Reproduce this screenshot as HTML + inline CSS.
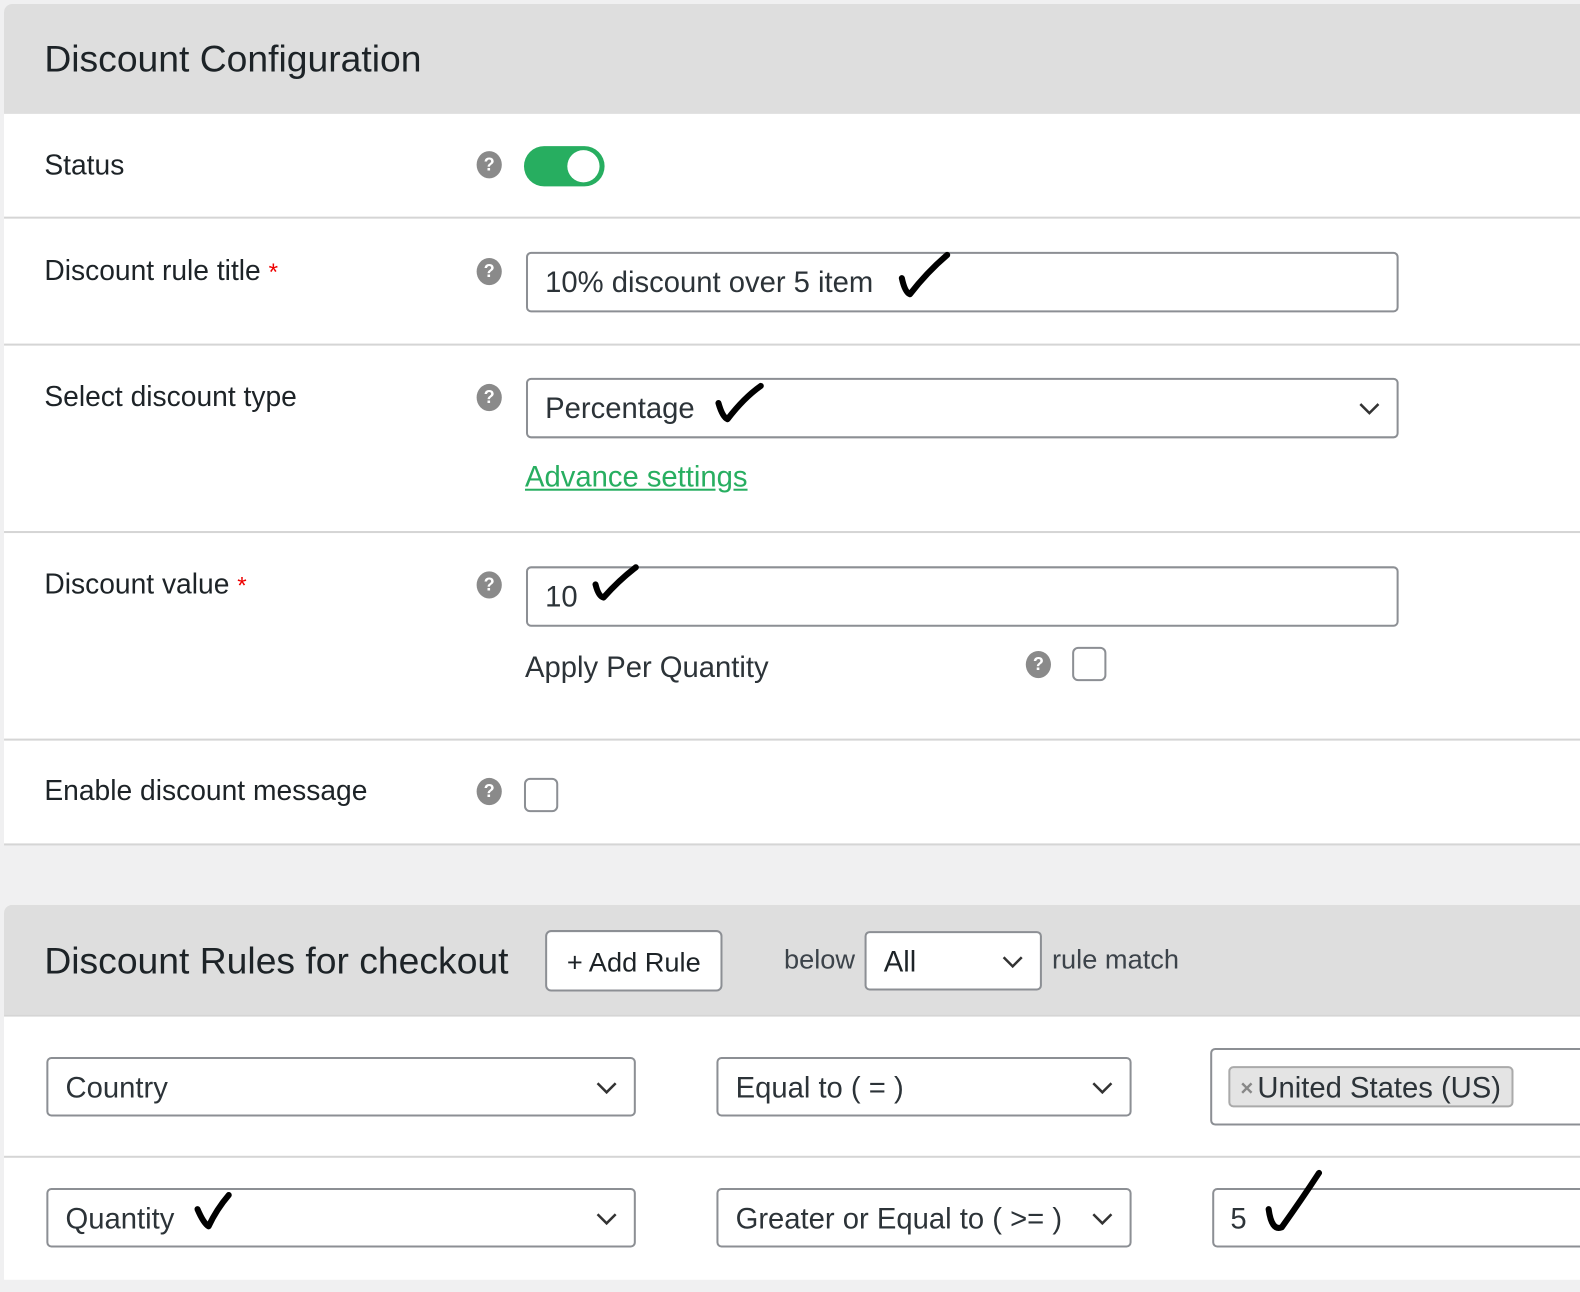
<!DOCTYPE html>
<html><head><meta charset="utf-8"><style>
*{box-sizing:border-box;margin:0;padding:0}
body{width:1580px;height:1282px;background:#f0f0f1;font-family:"Liberation Sans",sans-serif;color:#1d2327;position:relative;overflow:hidden}
#w{position:absolute;left:0;top:0;width:1568px;height:1272px;transform:scale(1.00765);transform-origin:0 0}
.a{position:absolute;white-space:nowrap}
.card{position:absolute;left:4px;right:-20px;background:#fff}
.hdr{position:absolute;left:0;right:0;top:0;background:#dedede}
.line{position:absolute;left:4px;right:-20px;height:2px;background:#d5d5d5}
.lbl{position:absolute;left:44px;font-size:28px;color:#1d2327;white-space:nowrap}
.req{color:#e00;font-size:24px}
.help{position:absolute;width:25px;height:27px;border-radius:50%;background:#8a8a8a;color:#fff;font-weight:bold;font-size:18px;text-align:center;line-height:27px}
.inp{position:absolute;border:2px solid #8c8f94;border-radius:5px;background:#fff;font-size:29px;color:#2c3338;padding-left:17px;padding-top:3px;display:flex;align-items:center;white-space:nowrap}
.chev{position:absolute;right:16px;top:50%;margin-top:-6px}
.cb{position:absolute;width:34px;height:34px;border:2px solid #8c8f94;border-radius:6px;background:#fff}
svg.ck{position:absolute;overflow:visible}
</style></head><body><div id="w">
<div class="card" style="top:4px;height:834px;border-radius:8px 0 0 0">
 <div class="hdr" style="height:109px;border-radius:8px 0 0 0"></div>
</div>
<div class="a" style="left:44px;top:38px;font-size:37px;color:#1d2327">Discount Configuration</div>
<div class="line" style="top:215px"></div>
<div class="line" style="top:341px"></div>
<div class="line" style="top:527px"></div>
<div class="line" style="top:733px"></div>
<div class="line" style="top:837px"></div>

<div class="lbl" style="top:148px">Status</div>
<div class="help" style="left:473px;top:150px">?</div>
<div class="a" style="left:520px;top:145px;width:80px;height:40px;border-radius:20px;background:#27ae60"><div class="a" style="left:43px;top:4px;width:32px;height:32px;border-radius:50%;background:#fff"></div></div>

<div class="lbl" style="top:253px">Discount rule title <span class="req">*</span></div>
<div class="help" style="left:473px;top:256px">?</div>
<div class="inp" style="left:522px;top:250px;width:866px;height:60px">10% discount over 5 item</div>

<div class="lbl" style="top:378px">Select discount type</div>
<div class="help" style="left:473px;top:381px">?</div>
<div class="inp" style="left:522px;top:375px;width:866px;height:60px">Percentage<svg class="chev" width="22" height="13" viewBox="0 0 22 13"><path d="M2 2L11 11L20 2" fill="none" stroke="#333" stroke-width="2.5"/></svg></div>
<div class="a" style="left:521px;top:458px;font-size:29px;color:#27ae60;text-decoration:underline">Advance settings</div>

<div class="lbl" style="top:564px">Discount value <span class="req">*</span></div>
<div class="help" style="left:473px;top:567px">?</div>
<div class="inp" style="left:522px;top:562px;width:866px;height:60px">10</div>
<div class="a" style="left:521px;top:647px;font-size:29px;color:#2c3338">Apply Per Quantity</div>
<div class="help" style="left:1018px;top:646px">?</div>
<div class="cb" style="left:1064px;top:642px"></div>

<div class="lbl" style="top:769px">Enable discount message</div>
<div class="help" style="left:473px;top:772px">?</div>
<div class="cb" style="left:520px;top:772px"></div>

<div class="card" style="top:898px;height:372px;border-radius:8px 0 0 0">
 <div class="hdr" style="height:111px;border-radius:8px 0 0 0;border-bottom:2px solid #d5d5d5"></div>
</div>
<div class="a" style="left:44px;top:933px;font-size:37px;color:#1d2327">Discount Rules for checkout</div>
<div class="a" style="left:541px;top:923px;width:176px;height:61px;border:2px solid #8c8f94;border-radius:6px;background:#fff;font-size:27px;text-align:center;line-height:60px;color:#1d2327">+ Add Rule</div>
<div class="a" style="left:778px;top:937px;font-size:27px;color:#3c434a">below</div>
<div class="inp" style="left:858px;top:924px;width:176px;height:59px;color:#1d2327">All<svg class="chev" width="22" height="13" viewBox="0 0 22 13"><path d="M2 2L11 11L20 2" fill="none" stroke="#333" stroke-width="2.5"/></svg></div>
<div class="a" style="left:1044px;top:937px;font-size:27px;color:#3c434a">rule match</div>

<div class="inp" style="left:46px;top:1049px;width:585px;height:59px">Country<svg class="chev" width="22" height="13" viewBox="0 0 22 13"><path d="M2 2L11 11L20 2" fill="none" stroke="#333" stroke-width="2.5"/></svg></div>
<div class="inp" style="left:711px;top:1049px;width:412px;height:59px">Equal to ( = )<svg class="chev" width="22" height="13" viewBox="0 0 22 13"><path d="M2 2L11 11L20 2" fill="none" stroke="#333" stroke-width="2.5"/></svg></div>
<div class="inp" style="left:1201px;top:1040px;width:400px;height:77px;padding-left:16px;padding-top:0"><div style="border:2px solid #aaa;border-radius:5px;background:#e4e4e4;height:41px;padding:3px 10px 0 10px;display:flex;align-items:center;font-size:29px;color:#2c3338"><span style="color:#888;font-size:22px;font-weight:bold;margin-right:4px">×</span>United States (US)</div></div>
<div class="line" style="top:1147px"></div>
<div class="inp" style="left:46px;top:1179px;width:585px;height:59px">Quantity<svg class="chev" width="22" height="13" viewBox="0 0 22 13"><path d="M2 2L11 11L20 2" fill="none" stroke="#333" stroke-width="2.5"/></svg></div>
<div class="inp" style="left:711px;top:1179px;width:412px;height:59px">Greater or Equal to ( &gt;= )<svg class="chev" width="22" height="13" viewBox="0 0 22 13"><path d="M2 2L11 11L20 2" fill="none" stroke="#333" stroke-width="2.5"/></svg></div>
<div class="inp" style="left:1203px;top:1179px;width:400px;height:59px;padding-left:16px">5</div>

<svg class="ck" style="left:0;top:0" width="1580" height="1282">
<g fill="none" stroke="#000" stroke-width="6" stroke-linecap="round" stroke-linejoin="round">
<path d="M895 276 Q898 290 903 292 Q920 270 940 253"/>
<path d="M713 400 Q717 414 722 416 Q738 395 755 383"/>
<path d="M591 580 Q594 592 599 593 Q614 576 631 563"/>
<path d="M196 1200 Q202 1214 207 1217 Q215 1200 227 1186"/>
<path d="M1259 1200 Q1262 1222 1272 1218 Q1292 1190 1309 1164"/>
</g></svg>
</div></body></html>
